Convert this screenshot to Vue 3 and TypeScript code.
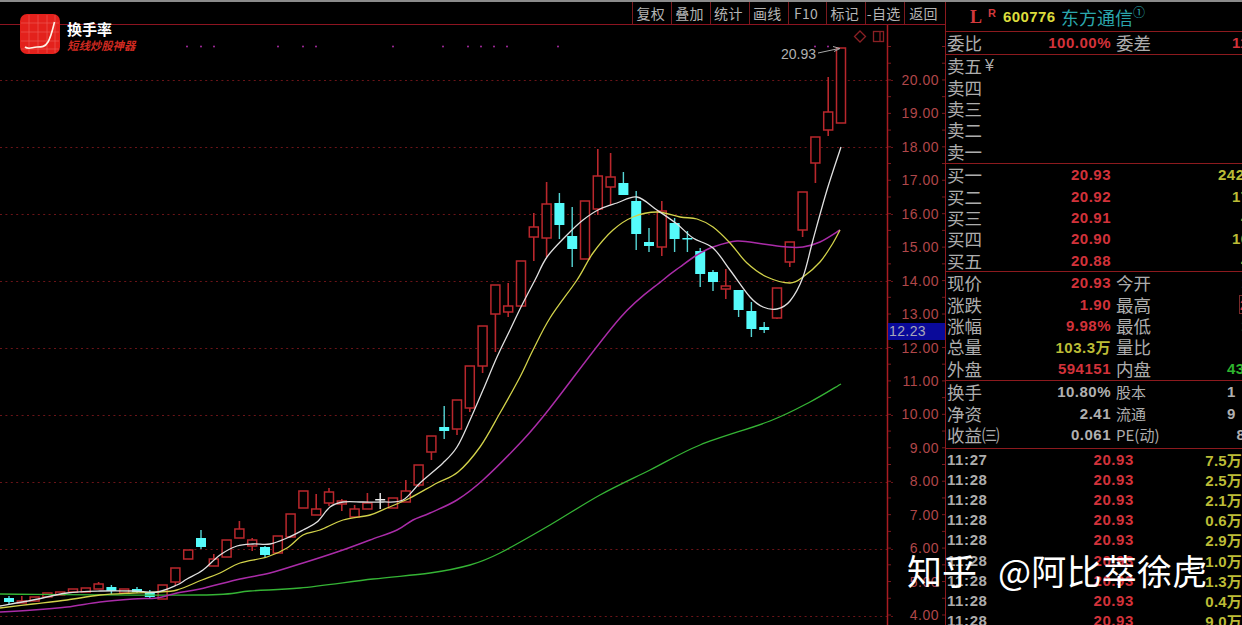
<template>
  <div class="terminal">
    <div class="chart-pane">
      <div class="toolbar">
        <span v-for="tool in tools" :key="tool" class="tool">{{ tool }}</span>
      </div>
      <svg class="chart" width="945" height="600" viewBox="0 25 945 600">
        <line v-for="y in gridYs" :key="'g' + y" x1="0" x2="893" :y1="y" :y2="y" class="grid" />
        <line x1="887.5" x2="887.5" y1="25" y2="625" class="axis-line" />
        <line v-for="t in minorTicks" :key="'m' + t" x1="888" x2="891" :y1="t" :y2="t" class="tick" />
        <line v-for="t in minorTicks" :key="'r' + t" x1="942" x2="945" :y1="t" :y2="t" class="tick" />
        <circle v-for="d in dots" :key="d" :cx="d" cy="46.5" r="1" class="dot" />

        <g v-for="c in candles" :key="c.x">
          <line :x1="c.x" :x2="c.x" :y1="c.high" :y2="c.low" :class="'wick-' + c.kind" />
          <rect
            v-if="c.kind === 'r'"
            :x="c.x - 4.5"
            :y="c.top"
            width="9"
            :height="c.bottom - c.top"
            class="body-r"
          />
          <rect
            v-else
            :x="c.x - 5"
            :y="c.top"
            width="10"
            :height="Math.max(c.bottom - c.top, 1.5)"
            :class="'body-' + c.kind"
          />
        </g>

        <path :d="ma60" class="ma ma-green" />
        <path :d="ma30" class="ma ma-magenta" />
        <path :d="ma10" class="ma ma-yellow" />
        <path :d="ma5" class="ma ma-white" />

        <text x="781" y="59" class="high-label">20.93</text>
        <path d="M818 53 L839 48.5 M833 46.5 L840 48.5 L834 51.5" class="high-arrow" />
        <path d="M860 31 L865.5 36.5 L860 42 L854.5 36.5 Z" class="marker" />
        <rect x="873.5" y="31.5" width="10" height="10" class="marker" />
        <line x1="880" x2="880" y1="31.5" y2="41.5" class="marker" />

        <text v-for="p in priceLabels" :key="p.text" x="939" :y="p.y + 5" class="price">{{ p.text }}</text>
        <rect x="888" y="323" width="57" height="17" class="now-box" />
        <text x="889" y="336" class="now-text">12.23</text>
      </svg>
    </div>

    <div class="panel">
      <div class="head section">
        <span class="flag">L</span>
        <span class="flag-r">R</span>
        <span class="code">600776</span>
        <span class="name">东方通信</span>
        <span class="circled">①</span>
      </div>

      <div class="section single">
        <div class="row">
          <div class="half"><span class="lbl">委比</span><span class="val red">100.00%</span></div>
          <span class="lbl">委差</span>
          <span class="far red" style="margin-left: 81px">11</span>
        </div>
      </div>

      <div class="section five tall">
        <div v-for="(a, i) in asks" :key="a" class="row">
          <span class="lbl">{{ a }}</span>
          <span v-if="i === 0" class="yen">¥</span>
        </div>
      </div>

      <div class="section five">
        <div v-for="b in bids" :key="b.label" class="row">
          <div class="half"><span class="lbl">{{ b.label }}</span><span class="val red">{{ b.price }}</span></div>
          <span class="far yellow" :style="{ marginLeft: b.offset + 'px' }">{{ b.size }}</span>
        </div>
      </div>

      <div class="section five tall">
        <div v-for="q in quotes" :key="q.label" class="row">
          <div class="half"><span class="lbl">{{ q.label }}</span><span class="val" :class="q.tone">{{ q.value }}</span></div>
          <span class="lbl">{{ q.label2 }}</span>
          <span class="far" :class="q.tone2" :style="{ marginLeft: q.offset + 'px' }">{{ q.value2 }}</span>
        </div>
      </div>

      <div class="section three">
        <div v-for="s in stats" :key="s.label" class="row">
          <div class="half"><span class="lbl">{{ s.label }}</span><span class="val grey">{{ s.value }}</span></div>
          <span class="lbl pe">{{ s.label2 }}</span>
          <span class="far grey" :style="{ marginLeft: s.offset + 'px' }">{{ s.value2 }}</span>
        </div>
      </div>

      <div class="ticks">
        <div v-for="(t, i) in ticks" :key="i" class="tick-row">
          <span class="tick-time">{{ t.time }}</span>
          <span class="tick-price red">20.93</span>
          <span class="tick-vol yellow">{{ t.vol }}</span>
        </div>
      </div>
    </div>

    <div class="brand">
      <svg width="40" height="40" viewBox="0 0 40 40">
        <rect width="40" height="40" rx="7" fill="#e3211c" />
        <path d="M1 9H39M1 18H39M1 27H39M1 35H39M9 1V39M18 1V39M27 1V39M35 1V39" stroke="#f0605a" stroke-width="0.6" fill="none" />
        <path d="M5 33 C9 36 12 33 17 33 S25 33 28 28 S33 14 34.5 8" stroke="#fff4e8" stroke-width="1.6" fill="none" />
      </svg>
      <div class="brand-text">
        <div class="brand-title">换手率</div>
        <div class="brand-sub">短线炒股神器</div>
      </div>
    </div>

    <div class="watermark">知乎<span class="handle">@阿比萃徐虎</span></div>
  </div>
</template>

<script setup lang="ts">
type Kind = 'r' | 'c' | 'w';

interface Candle {
  x: number;
  high: number;
  top: number;
  bottom: number;
  low: number;
  kind: Kind;
}

const tools = ['复权', '叠加', '统计', '画线', 'F10', '标记', '-自选', '返回'];

const gridYs = Array.from({ length: 9 }, (_, i) => 80.5 + 67 * i);
const minorTicks = Array.from({ length: 36 }, (_, i) => 46.5 + 16.72 * i);
const dots = [187, 201, 214, 278, 303, 316, 393, 443, 468, 481, 494, 507, 558, 815, 828];

// high, body top, body bottom, low, kind - one entry per trading day, left to right
const raw: [number, number, number, number, Kind][] = [
  [596, 598, 602, 604, 'c'], [596, 601, 603, 603, 'r'], [597, 597, 601, 601, 'r'], [593, 593, 597, 597, 'r'],
  [592, 592, 595, 595, 'r'], [589, 589, 592, 592, 'r'], [588, 588, 592, 592, 'r'], [582, 584, 589, 589, 'r'],
  [585, 587, 591, 594, 'c'], [589, 589, 593, 594, 'r'], [587, 589, 592, 593, 'c'], [590, 592, 597, 599, 'c'],
  [585, 585, 599, 599, 'r'], [568, 568, 582, 586, 'r'], [550, 550, 559, 559, 'r'], [530, 538, 547, 549, 'c'],
  [554, 559, 566, 566, 'r'], [540, 540, 557, 557, 'r'], [521, 529, 538, 538, 'r'], [538, 540, 546, 551, 'r'],
  [546, 547, 555, 557, 'c'], [536, 536, 553, 553, 'r'], [514, 514, 537, 537, 'r'], [491, 491, 508, 508, 'r'],
  [494, 509, 515, 515, 'r'], [488, 492, 503, 506, 'r'], [499, 501, 504, 511, 'r'], [505, 509, 517, 517, 'r'],
  [493, 503, 509, 509, 'r'], [493, 499, 500, 509, 'w'], [498, 498, 508, 508, 'r'], [480, 491, 502, 502, 'r'],
  [465, 465, 485, 487, 'r'], [436, 436, 452, 460, 'r'], [406, 427, 431, 439, 'c'], [400, 400, 429, 435, 'r'],
  [366, 366, 408, 412, 'r'], [326, 326, 366, 373, 'r'], [285, 285, 314, 352, 'r'], [283, 306, 312, 317, 'r'],
  [261, 261, 306, 306, 'r'], [213, 227, 237, 261, 'r'], [182, 204, 238, 257, 'r'], [193, 203, 225, 239, 'c'],
  [207, 236, 249, 267, 'c'], [201, 201, 259, 259, 'r'], [149, 176, 209, 215, 'r'], [153, 177, 187, 205, 'r'],
  [172, 183, 195, 195, 'c'], [191, 201, 234, 250, 'c'], [228, 242, 246, 252, 'c'], [201, 211, 247, 256, 'r'],
  [218, 223, 239, 252, 'c'], [231, 238, 239, 252, 'c'], [248, 251, 274, 287, 'c'], [270, 272, 282, 291, 'c'],
  [269, 286, 289, 299, 'r'], [290, 290, 310, 317, 'c'], [302, 311, 329, 337, 'c'], [322, 327, 330, 333, 'c'],
  [288, 288, 318, 319, 'r'], [242, 242, 262, 267, 'r'], [192, 192, 230, 237, 'r'], [137, 137, 163, 183, 'r'],
  [77, 112, 130, 136, 'r'], [48, 48, 123, 123, 'r'],
];

const candles: Candle[] = raw.map(([high, top, bottom, low, kind], i) => ({
  x: 9 + i * 12.8,
  high,
  top,
  bottom,
  low,
  kind,
}));

// catmull-rom through the sampled points so the averages don't look faceted
const smooth = (src: string): string => {
  const p = src.split(' ').map((s) => s.split(',').map(Number));
  let d = `M${p[0][0]} ${p[0][1]}`;
  for (let i = 0; i < p.length - 1; i++) {
    const a = p[Math.max(i - 1, 0)];
    const b = p[i];
    const c = p[i + 1];
    const e = p[Math.min(i + 2, p.length - 1)];
    const c1x = b[0] + (c[0] - a[0]) / 6;
    const c1y = b[1] + (c[1] - a[1]) / 6;
    const c2x = c[0] - (e[0] - b[0]) / 6;
    const c2y = c[1] - (e[1] - b[1]) / 6;
    d += ` C${c1x.toFixed(1)} ${c1y.toFixed(1)} ${c2x.toFixed(1)} ${c2y.toFixed(1)} ${c[0]} ${c[1]}`;
  }
  return d;
};

const ma5 = smooth(
  '0,606 33,600 67,593 100,591 133,591 157,592 177,585 187,579 203,570 220,555 237,546 253,544 270,544 287,538 303,530 317,522 330,507 343,502 363,502 383,502 403,500 420,483 443,463 457,447 470,420 483,390 497,357 510,330 522,305 535,280 547,257 567,235 583,220 600,209 617,203 637,197 657,210 677,224 693,238 713,248 730,270 750,297 763,307 777,309 790,301 803,277 813,240 827,190 841,147',
);
const ma10 = smooth(
  '0,608 33,604 67,600 100,595 133,593 157,592 177,590 202,580 220,573 240,563 267,557 287,548 303,535 320,530 343,520 370,515 387,508 410,498 437,483 458,472 480,447 500,413 520,377 533,350 550,318 577,280 593,253 613,230 633,217 657,212 680,217 697,219 713,227 730,243 747,263 767,277 790,283 803,277 820,262 833,243 840,230',
);
const ma30 = smooth(
  '0,612 33,610 67,607 100,602 133,599 157,598 177,593 200,589 240,579 270,573 303,563 337,552 370,540 397,530 413,520 430,513 457,500 483,480 523,440 550,408 620,318 663,280 680,267 697,255 713,247 737,241 763,244 787,247 803,247 820,242 840,230',
);
const ma60 = smooth(
  '0,594 200,595 250,591 300,588 373,579 430,573 470,565 500,553 550,525 600,495 650,470 700,445 770,421 810,402 841,384',
);

const priceLabels = Array.from({ length: 17 }, (_, i) => ({
  text: (20 - i).toFixed(2),
  y: 80 + 33.44 * i,
}));

const asks = ['卖五', '卖四', '卖三', '卖二', '卖一'];

const bids = [
  { label: '买一', price: '20.93', size: '242', offset: 102 },
  { label: '买二', price: '20.92', size: '17', offset: 116 },
  { label: '买三', price: '20.91', size: '4', offset: 125 },
  { label: '买四', price: '20.90', size: '16', offset: 116 },
  { label: '买五', price: '20.88', size: '4', offset: 125 },
];

const quotes = [
  { label: '现价', value: '20.93', tone: 'red', label2: '今开', value2: '1', tone2: 'red', offset: 90 },
  { label: '涨跌', value: '1.90', tone: 'red', label2: '最高', value2: '2', tone2: 'red boxed', offset: 88 },
  { label: '涨幅', value: '9.98%', tone: 'red', label2: '最低', value2: '1', tone2: 'green', offset: 90 },
  { label: '总量', value: '103.3万', tone: 'yellow', label2: '量比', value2: '', tone2: 'grey', offset: 90 },
  { label: '外盘', value: '594151', tone: 'red', label2: '内盘', value2: '43', tone2: 'green', offset: 76 },
];

const stats = [
  { label: '换手', value: '10.80%', label2: '股本', value2: '1', offset: 81 },
  { label: '净资', value: '2.41', label2: '流通', value2: '9', offset: 81 },
  { label: '收益㈢', value: '0.061', label2: 'PE(动)', value2: '8', offset: 77 },
];

const ticks = [
  { time: '11:27', vol: '7.5万' },
  { time: '11:28', vol: '2.5万' },
  { time: '11:28', vol: '2.1万' },
  { time: '11:28', vol: '0.6万' },
  { time: '11:28', vol: '2.9万' },
  { time: '11:28', vol: '1.0万' },
  { time: '11:28', vol: '1.3万' },
  { time: '11:28', vol: '0.4万' },
  { time: '11:28', vol: '9.0万' },
];
</script>

<style scoped>
.terminal {
  position: relative;
  display: flex;
  width: 1242px;
  height: 625px;
  overflow: hidden;
  box-sizing: border-box;
  border-top: 2px solid #8b8b8b;
  background: #000;
  font-family: "Liberation Sans", "Noto Sans CJK SC", sans-serif;
}

.chart-pane {
  display: flex;
  flex-direction: column;
  width: 945px;
  flex: none;
}

.toolbar {
  display: flex;
  justify-content: flex-end;
  height: 22px;
  flex: none;
  box-sizing: content-box;
  border-bottom: 1px solid #8c1420;
}

.tool {
  display: flex;
  align-items: center;
  justify-content: center;
  width: 38.8px;
  padding-right: 3px;
  border-left: 1px solid #7a1a1e;
  box-sizing: border-box;
  font-family: "Noto Sans CJK SC", sans-serif;
  font-size: 14px;
  letter-spacing: 0.3px;
  color: #b4b4b4;
  white-space: nowrap;
}

.tool:last-child {
  width: 41px;
}

.chart {
  display: block;
  flex: none;
}

.grid {
  stroke: #6a1418;
  stroke-width: 1;
  stroke-dasharray: 2 3.4;
}

.axis-line {
  stroke: #a81c22;
  stroke-width: 1.5;
}

.tick {
  stroke: #7a1a1e;
  stroke-width: 1;
}

.dot {
  fill: #a52aa0;
}

.wick-r {
  stroke: #b9272c;
  stroke-width: 1.6;
}

.wick-c {
  stroke: #55d5d5;
  stroke-width: 1.4;
}

.wick-w {
  stroke: #f0f0f0;
  stroke-width: 1.4;
}

.body-r {
  fill: #000;
  stroke: #b9272c;
  stroke-width: 1.5;
}

.body-c {
  fill: #55fbfb;
}

.body-w {
  fill: #f0f0f0;
}

.ma {
  fill: none;
  stroke-width: 1.3;
  stroke-linejoin: round;
}

.ma-white {
  stroke: #e0e0e0;
}

.ma-yellow {
  stroke: #d2d24a;
}

.ma-magenta {
  stroke: #aa2ca8;
  stroke-width: 1.5;
}

.ma-green {
  stroke: #35b435;
}

.high-label {
  font-size: 14px;
  fill: #b0b0b0;
}

.high-arrow {
  fill: none;
  stroke: #a8a8a8;
  stroke-width: 1;
}

.marker {
  fill: none;
  stroke: #8a2024;
  stroke-width: 1.3;
}

.price {
  font-size: 14px;
  letter-spacing: 0.5px;
  text-anchor: end;
  fill: #b0474a;
}

.now-box {
  fill: #0a0a9a;
}

.now-text {
  font-size: 14px;
  letter-spacing: 0.4px;
  fill: #a8a8b8;
}

.panel {
  flex: 1;
  min-width: 0;
  box-sizing: border-box;
  padding-left: 0;
  border-left: 1px solid #8c1a1e;
  overflow: hidden;
}

.section {
  box-sizing: content-box;
  border-bottom: 1px solid #8c1a1e;
  padding-left: 1px;
}

.head {
  display: flex;
  align-items: center;
  height: 29px;
  padding-left: 24px;
  border-bottom: 1px solid #8c1a1e;
}

.flag {
  font-family: "Liberation Serif", serif;
  font-weight: 700;
  font-size: 18px;
  color: #d2393c;
  width: 18px;
  margin-top: 2px;
}

.flag-r {
  font-size: 11px;
  font-weight: 700;
  color: #d2393c;
  width: 15px;
  margin-top: -8px;
}

.code {
  font-size: 15px;
  font-weight: 700;
  letter-spacing: 0.4px;
  color: #dcdc3c;
  width: 58px;
}

.name {
  font-family: "Noto Sans CJK SC", sans-serif;
  font-size: 18px;
  color: #2ba7ad;
}

.circled {
  font-family: "Noto Sans CJK SC", sans-serif;
  font-size: 12px;
  color: #2ba7ad;
  margin-top: -10px;
}

.single {
  height: 22px;
}

.five {
  height: 107px;
}

.tall {
  height: 108px;
}

.three {
  height: 67px;
}

.row {
  display: flex;
  align-items: center;
  height: 21.4px;
  white-space: nowrap;
}

.half {
  display: flex;
  align-items: center;
  width: 164px;
  margin-right: 5px;
  flex: none;
}

.lbl {
  font-family: "Noto Sans CJK SC", sans-serif;
  font-size: 17.5px;
  color: #adadad;
  line-height: 21px;
  flex: none;
}

.pe {
  font-size: 15px;
  font-weight: 400;
}

.val {
  flex: 1;
  text-align: right;
  font-size: 15px;
  font-weight: 700;
  letter-spacing: 0.5px;
}

.far {
  font-size: 15px;
  font-weight: 700;
  letter-spacing: 0.5px;
  flex: none;
}

.boxed {
  border: 1px solid #7a2a2a;
}

.yen {
  font-size: 16px;
  color: #adadad;
  margin-left: 3px;
}

.red {
  color: #d2323a;
}

.yellow {
  color: #bcbc36;
}

.green {
  color: #2eb52e;
}

.grey {
  color: #b0b0b0;
}

.tick-row {
  display: flex;
  align-items: center;
  height: 20.2px;
  padding-left: 1px;
  font-size: 15px;
  font-weight: 700;
  letter-spacing: 0.6px;
  white-space: nowrap;
}

.tick-time {
  width: 60px;
  color: #adadad;
}

.tick-price {
  width: 128px;
  text-align: right;
}

.tick-vol {
  width: 108px;
  text-align: right;
  letter-spacing: 0.2px;
  flex: none;
}

.brand {
  position: absolute;
  left: 20px;
  top: 12px;
  display: flex;
  gap: 7px;
  align-items: center;
}

.brand-text {
  font-family: "Noto Sans CJK SC", sans-serif;
  margin-top: 3px;
}

.brand-title {
  font-size: 15px;
  font-weight: 700;
  line-height: 18px;
  color: #fff;
}

.brand-sub {
  font-size: 11.4px;
  font-weight: 700;
  font-style: italic;
  line-height: 14px;
  color: #cf2a20;
  white-space: nowrap;
}

.watermark {
  position: absolute;
  left: 907px;
  top: 543px;
  font-family: "Noto Sans CJK SC", sans-serif;
  font-size: 35px;
  line-height: 50px;
  color: #fff;
  white-space: nowrap;
}

.handle {
  margin-left: 21px;
  letter-spacing: 0.2px;
}
</style>
